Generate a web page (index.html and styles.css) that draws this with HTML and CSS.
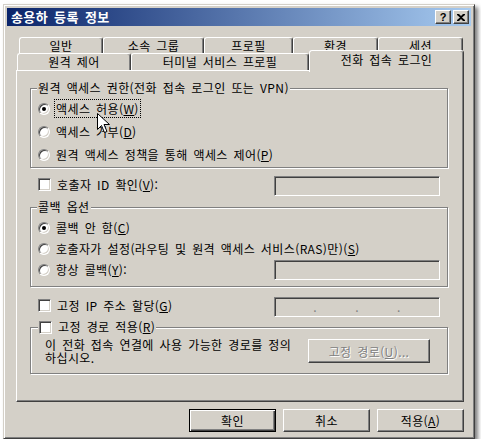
FILE: index.html
```html
<!DOCTYPE html>
<html lang="ko">
<head>
  <meta charset="UTF-8" />
  <title>송용하 등록 정보</title>
  <link rel="stylesheet" href="styles.css">
</head>
<body>
  <div class="window">
    <div class="titlebar">
      <span class="title">송용하 등록 정보</span>
      <div class="title-btns">
        <span class="tbtn help">?</span>
        <span class="tbtn close"><svg width="8" height="7" viewBox="0 0 8 7"><path d="M0 0h2l2 2 2-2h2v1L5 3.5 8 6v1H6L4 5 2 7H0V6l3-2.5L0 1z" fill="#000"/></svg></span>
      </div>
    </div>
    <div class="dlg-body">
      <div class="tab-row back">
        <div class="tab w84">일반</div>
        <div class="tab w101">소속 그룹</div>
        <div class="tab w89">프로필</div>
        <div class="tab w85">환경</div>
        <div class="tab w85">세션</div>
      </div>
      <div class="tab-row front">
        <div class="tab w114">원격 제어</div>
        <div class="tab w178">터미널 서비스 프로필</div>
        <div class="tab selected">전화 접속 로그인</div>
      </div>
      <div class="panel">
        <fieldset class="group g-access">
          <legend>원격 액세스 권한(전화 접속 로그인 또는 VPN)</legend>
          <div class="opt"><span class="radio on"></span><span class="focus">액세스 허용(<u>W</u>)</span></div>
          <div class="opt"><span class="radio"></span><span>액세스 거부(<u>D</u>)</span></div>
          <div class="opt"><span class="radio"></span><span>원격 액세스 정책을 통해 액세스 제어(<u>P</u>)</span></div>
        </fieldset>
        <div class="check-row">
          <span class="check"></span><span>호출자 ID 확인(<u>V</u>):</span>
          <span class="field"></span>
        </div>
        <fieldset class="group g-callback">
          <legend>콜백 옵션</legend>
          <div class="opt"><span class="radio on"></span><span>콜백 안 함(<u>C</u>)</span></div>
          <div class="opt"><span class="radio"></span><span>호출자가 설정(라우팅 및 원격 액세스 서비스(RAS)만)(<u>S</u>)</span></div>
          <div class="opt"><span class="radio"></span><span>항상 콜백(<u>Y</u>):</span><span class="field"></span></div>
        </fieldset>
        <div class="check-row ip-row">
          <span class="check"></span><span>고정 IP 주소 할당(<u>G</u>)</span>
          <span class="field ip"><i>.</i><i>.</i><i>.</i></span>
        </div>
        <fieldset class="group g-route">
          <legend><span class="check"></span><span>고정 경로 적용(<u>R</u>)</span></legend>
          <div class="route">
            <p>이 전화 접속 연결에 사용 가능한 경로를 정의<br>하십시오.</p>
            <span class="btn disabled">고정 경로(<u>U</u>)...</span>
          </div>
        </fieldset>
      </div>
      <div class="actions">
        <span class="btn default">확인</span>
        <span class="btn">취소</span>
        <span class="btn">적용(<u>A</u>)</span>
      </div>
    </div>
    <svg class="cursor" width="13" height="21" viewBox="0 0 13 21"><path d="M0.5 0.5v16l4-4 3 7 2.5-1-3-7h5.5z" fill="#fff" stroke="#000"/></svg>
  </div>
</body>
</html>
```

FILE: styles.css
```css
body { margin: 0; background: #fff; font-family: "Noto Sans CJK KR", "Noto Sans", sans-serif; font-size: 12px; letter-spacing: 0.4px; word-spacing: 2px; color: #000; }
u { text-decoration: underline; text-underline-offset: 1px; }

.window { position: relative; box-sizing: border-box; width: 472px; height: 435px; margin: 4px 0 0 3px; padding: 3px; background: #d4d0c8; border: 1px solid; border-color: #d4d0c8 #404040 #404040 #d4d0c8; box-shadow: inset 1px 1px #fff, inset -1px -1px #808080, 3px 3px 4px rgba(0,0,0,0.5); }

.titlebar { height: 18px; display: flex; align-items: center; justify-content: space-between; padding: 0 2px 0 4px; background: linear-gradient(to right, #0a246a, #a6caf0); }
.title { color: #fff; font-weight: bold; font-size: 13px; line-height: 18px; }
.title-btns { display: flex; gap: 2px; }
.tbtn { box-sizing: border-box; width: 16px; height: 14px; display: flex; align-items: center; justify-content: center; background: #d4d0c8; border: 1px solid; border-color: #fff #404040 #404040 #fff; box-shadow: inset -1px -1px #808080; font-family: "Liberation Sans", sans-serif; font-weight: bold; font-size: 11px; line-height: 12px; letter-spacing: 0; }

.dlg-body { padding: 11px 7px 0 9px; }

.tab-row { display: flex; align-items: flex-start; }
.tab-row.back { height: 16px; margin-left: 3px; }
.tab-row.front { height: 17px; margin-left: 1px; }
.tab { box-sizing: border-box; height: 100%; border: 1px solid; border-bottom: none; border-color: #fff #404040 transparent #fff; box-shadow: inset -1px 0 #808080; border-radius: 3px 3px 0 0; text-align: center; line-height: 14px; }
.back .tab { line-height: 13px; padding-top: 1px; overflow: hidden; }
.front .tab { padding-top: 1px; }
.w84 { width: 84px; } .w85 { width: 85px; } .w89 { width: 89px; } .w101 { width: 101px; }
.w114 { width: 114px; } .w178 { width: 178px; }
.tab.selected { position: relative; z-index: 1; width: 155px; height: 22px; margin-top: -3px; padding-top: 2px; background: #d4d0c8; }

.panel { box-sizing: border-box; height: 332px; padding: 10px 15px 0 13px; border: 1px solid; border-color: #fff #404040 #404040 #fff; box-shadow: inset -1px -1px #808080; }

.group { margin: 0; padding: 2px 7px 1px 7px; border: 1px solid #808080; box-shadow: 1px 1px #fff, inset 1px 1px #fff; }
.group legend { padding: 0 1px; margin-left: -1px; line-height: 14px; background: #d4d0c8; }
.opt { display: flex; align-items: center; height: 23px; }
.g-callback { margin-top: 4px; padding: 3px 7px 6px 7px; }
.g-callback .opt { height: 21px; }

.radio { position: relative; box-sizing: border-box; width: 12px; height: 12px; margin-right: 6px; border-radius: 50%; background: #fff; border: 1px solid; border-color: #808080 #fff #fff #808080; box-shadow: inset 1px 1px #404040, inset -1px -1px #d4d0c8; flex: none; }
.radio.on::after { content: ""; position: absolute; left: 3px; top: 3px; width: 4px; height: 4px; border-radius: 50%; background: #000; }
.check { box-sizing: border-box; width: 13px; height: 13px; margin-right: 6px; background: #fff; border: 1px solid; border-color: #808080 #fff #fff #808080; box-shadow: inset 1px 1px #404040, inset -1px -1px #d4d0c8; flex: none; }
.focus { outline: 1px dotted #000; outline-offset: 0; padding: 0 1px; margin-left: -1px; }

.check-row { display: flex; align-items: center; height: 24px; margin-top: 4px; padding: 0 8px 0 8px; }
.check-row .field { align-self: flex-end; }
.ip-row { margin-top: 6px; }
.field { box-sizing: border-box; width: 166px; height: 20px; margin-left: auto; background: #d4d0c8; border: 1px solid; border-color: #808080 #fff #fff #808080; box-shadow: inset 1px 1px #404040, inset -1px -1px #d4d0c8; }
.field.ip { display: flex; justify-content: space-evenly; color: #808080; line-height: 18px; }
.field.ip i { font-style: normal; }

.g-route { margin-top: 3px; padding: 4px 17px 9px 14px; }
.g-route legend { display: flex; align-items: center; margin-left: -7px; }
.route { display: flex; align-items: center; justify-content: space-between; }
.route p { margin: 0; line-height: 13px; white-space: nowrap; }

.btn { box-sizing: border-box; display: flex; align-items: center; justify-content: center; width: 87px; height: 23px; background: #d4d0c8; border: 1px solid; border-color: #fff #404040 #404040 #fff; box-shadow: inset -1px -1px #808080; }
.btn.default { border-color: #000; box-shadow: inset 1px 1px #fff, inset -1px -1px #404040, inset -2px -2px #808080; }
.btn.disabled { width: 122px; height: 24px; color: #808080; text-shadow: 1px 1px #fff; }
.actions { display: flex; justify-content: flex-end; gap: 7px; margin-top: 7px; }

.cursor { position: absolute; left: 93px; top: 108px; z-index: 2; }
```
